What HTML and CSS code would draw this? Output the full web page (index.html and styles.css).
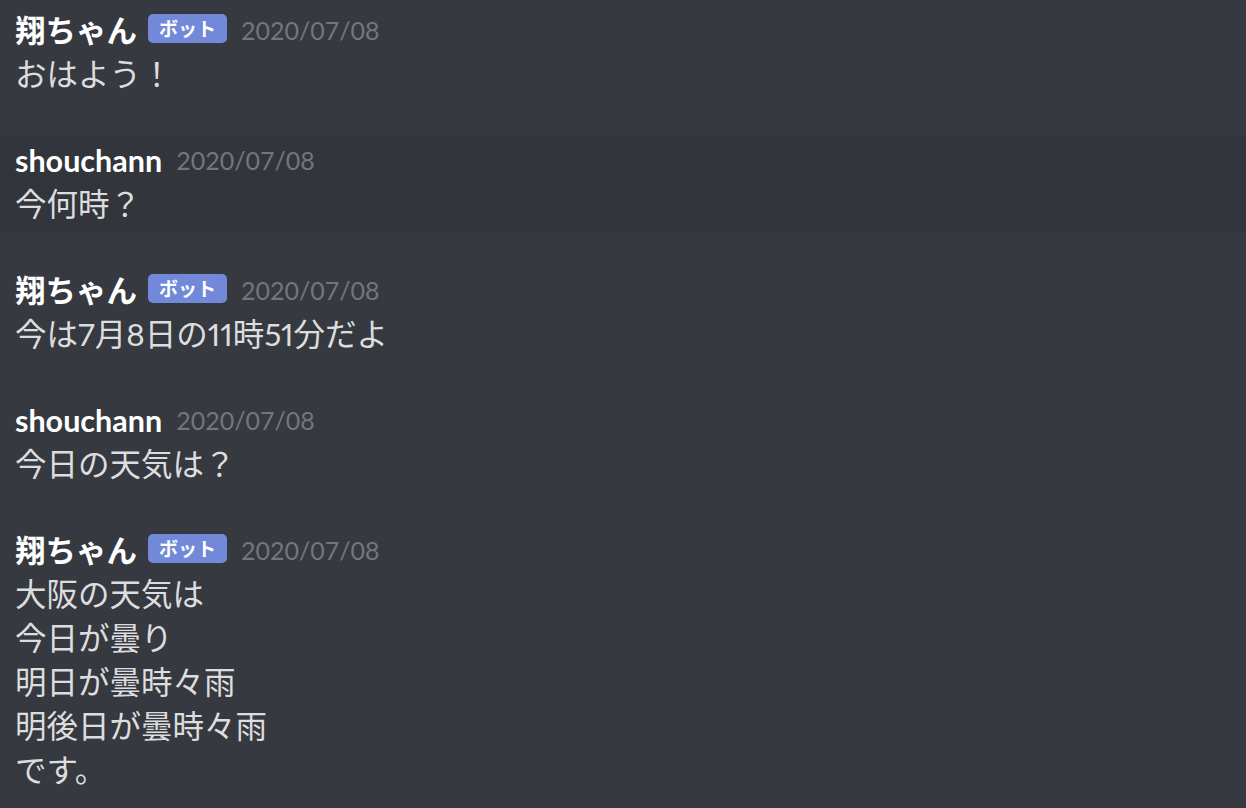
FILE: index.html
```html
<!DOCTYPE html>
<html lang="ja">
<head>
<meta charset="utf-8">
<link rel="stylesheet" href="styles.css">
</head>
<body>
<div class="chat">
  <div class="message">
    <div class="header"><span class="name">翔ちゃん</span><span class="bot">ボット</span><span class="time">2020/07/08</span></div>
    <div class="content">おはよう！</div>
  </div>
  <div class="message hover">
    <div class="header"><span class="name">shouchann</span><span class="time">2020/07/08</span></div>
    <div class="content">今何時？</div>
  </div>
  <div class="message">
    <div class="header"><span class="name">翔ちゃん</span><span class="bot">ボット</span><span class="time">2020/07/08</span></div>
    <div class="content">今は7月8日の11時51分だよ</div>
  </div>
  <div class="message">
    <div class="header"><span class="name">shouchann</span><span class="time">2020/07/08</span></div>
    <div class="content">今日の天気は？</div>
  </div>
  <div class="message">
    <div class="header"><span class="name">翔ちゃん</span><span class="bot">ボット</span><span class="time">2020/07/08</span></div>
    <div class="content">大阪の天気は<br>今日が曇り<br>明日が曇時々雨<br>明後日が曇時々雨<br>です。</div>
  </div>
</div>
</body>
</html>
```
FILE: styles.css
```css
html, body {
  margin: 0;
  padding: 0;
  background: #36393f;
}
body {
  font-family: "Lato", "Noto Sans CJK JP", sans-serif;
  color: #dcddde;
  width: 1246px;
  height: 808px;
  overflow: hidden;
}
.chat {
  display: flex;
  flex-direction: column;
  gap: 34px;
  padding-top: 4px;
}
.message {
  padding: 4px 15px;
}
.message.hover {
  background: #32353b;
  margin-top: 2px;
  margin-bottom: -2px;
  padding-top: 2px;
  padding-bottom: 6px;
}
.header {
  display: flex;
  align-items: center;
  height: 44px;
}
.name {
  font-size: 30.5px;
  font-weight: 700;
  color: #ffffff;
  line-height: 44px;
}
.bot {
  background: #7289da;
  color: #ffffff;
  font-size: 19px;
  font-weight: 700;
  border-radius: 5px;
  height: 29px;
  line-height: 29px;
  padding: 0 11px;
  margin-left: 11px;
  margin-top: -3px;
}
.time {
  font-size: 25px;
  color: #72767d;
  margin-left: 14px;
  line-height: 44px;
}
.content {
  font-size: 31.5px;
  line-height: 44px;
  font-variant-numeric: proportional-nums;
}
```
